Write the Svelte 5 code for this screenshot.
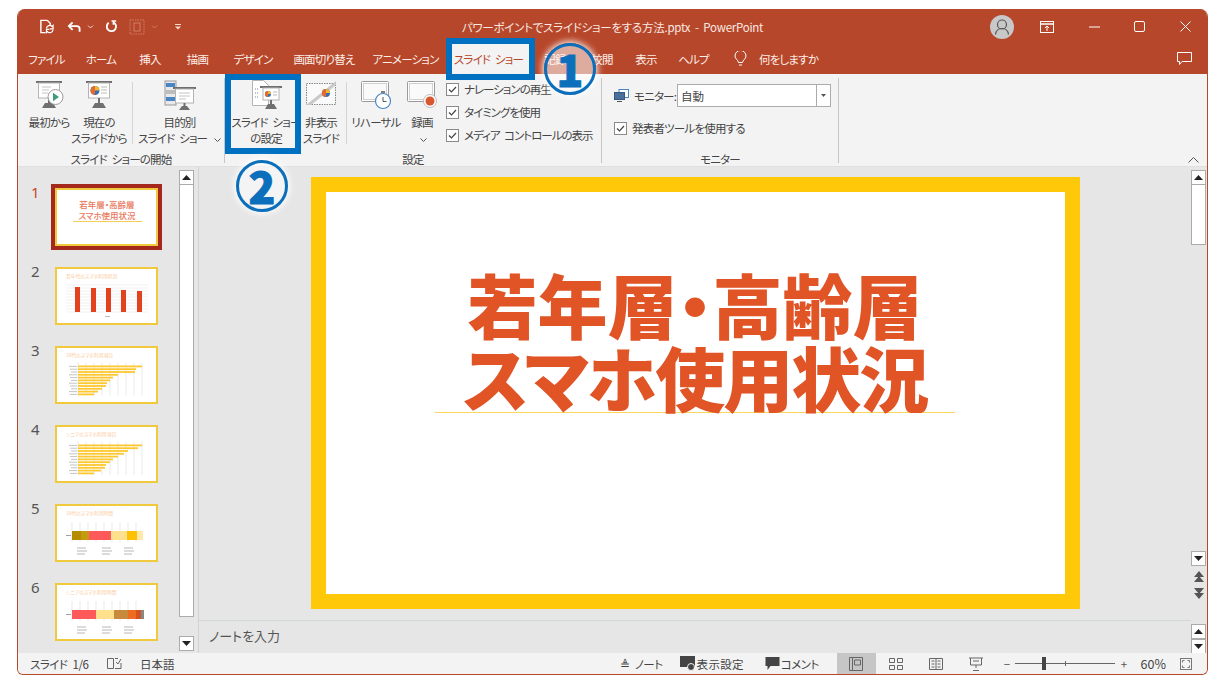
<script lang="ts">
  const tabs = [
    { label: "ファイル", w: 57 },
    { label: "ホーム", w: 52 },
    { label: "挿入", w: 46 },
    { label: "描画", w: 49 },
    { label: "デザイン", w: 62 },
    { label: "画面切り替え", w: 80 },
    { label: "アニメーション", w: 83 },
    { label: "スライド ショー", w: 83, active: true },
    { label: "記録", w: 50 },
    { label: "校閲", w: 44 },
    { label: "表示", w: 44 },
    { label: "ヘルプ", w: 51 },
  ];

  const checks = ["ナレーションの再生", "タイミングを使用", "メディア コントロールの表示"];

  const hbars3 = [64, 58, 57, 40, 35, 32, 29, 28, 24, 20, 16];
  const hbars4 = [64, 60, 50, 46, 40, 35, 32, 28, 27, 23, 16];
  const gridX = [23, 31, 39, 47, 55, 63, 71, 79, 87];

  const slides = [
    { n: 1, kind: "title" },
    { n: 2, kind: "col", title: "若年代のスマホ利用状況" },
    { n: 3, kind: "hbar", title: "10代のスマホ利用項目", bars: hbars3 },
    { n: 4, kind: "hbar", title: "シニアのスマホ利用項目", bars: hbars4 },
    {
      n: 5,
      kind: "stack",
      title: "10代のスマホ利用時間",
      segs: [
        [17, 9, "#b58c00"],
        [26, 8, "#c39a10"],
        [34, 22, "#ff5a5a"],
        [56, 16, "#ffe08c"],
        [72, 10, "#ffc000"],
        [82, 6, "#ffe8a8"],
      ],
    },
    {
      n: 6,
      kind: "stack",
      title: "シニアのスマホ利用時間",
      segs: [
        [17, 24, "#ff5a5a"],
        [41, 18, "#ffe08c"],
        [59, 14, "#c88a3c"],
        [73, 8, "#ee6c20"],
        [81, 5, "#d4521f"],
        [86, 3, "#888888"],
      ],
    },
  ];
</script>

{#snippet board()}
  <path d="M3 1h26v2H3z" fill="#6f6f6f" />
  <rect x="5.5" y="3" width="21" height="15" fill="#fff" stroke="#b4b4b4" />
  <path d="M16 18v5" stroke="#6f6f6f" stroke-width="2" />
  <path d="M9 28l3-5h8l3 5z" fill="#6f6f6f" />
{/snippet}

{#snippet pie(cx, cy, r)}
  <circle {cx} {cy} {r} fill="#2f6fb5" />
  <path d="M{cx} {cy}V{cy - r}A{r} {r} 0 0 0 {cx - r} {cy}A{r} {r} 0 0 0 {cx} {cy + r}z" fill="#e8692c" />
  <path d="M{cx} {cy}V{cy - r}A{r} {r} 0 0 1 {cx + r} {cy}z" fill="#f2b632" />
{/snippet}

{#snippet check()}
  <svg class="cb" viewBox="0 0 13 13" width="13" height="13">
    <rect x="0.5" y="0.5" width="12" height="12" fill="#fff" stroke="#8a8a8a" />
    <path d="M3 6.5l2.5 2.5L10 4" fill="none" stroke="#444" stroke-width="1.2" />
  </svg>
{/snippet}

{#snippet down()}
  <svg class="dn" viewBox="0 0 7 4" width="7" height="4" fill="none" stroke="#555"><path d="M.5.5l3 3 3-3" /></svg>
{/snippet}

{#snippet scrollBtn(up)}
  <div class="sbtn">
    <svg viewBox="0 0 9 5" width="9" height="5"><path d={up ? "M4.5 0L9 5H0z" : "M0 0h9L4.5 5z"} fill="#222" /></svg>
  </div>
{/snippet}

{#snippet thumbHead(title)}
  <text x="11" y="11" class="th-title">{title}</text>
{/snippet}

<div class="page">
  <div class="window">
    <header class="titlebar">
      <div class="qat">
        <svg viewBox="0 0 16 16" width="15" height="15" fill="none" stroke="#fff" stroke-width="1.5">
          <path d="M9 1.5H2v13h5M9 1.5l3 3v2" />
          <path d="M8 10a3.5 3.5 0 0 1 6-2l1-1v3.5h-3.5M15 11.500a3.500 3.500 0 0 1-6 2l-1 1V11h3" stroke-width="1.300" />
        </svg>
        <svg class="undo" viewBox="0 0 15 12" width="14" height="12" fill="none" stroke="#fff" stroke-width="2">
          <path d="M13.500 11V8a3 3 0 0 0-3-3H3" /><path d="M6 1L2 5l4 4" />
        </svg>
        <svg class="chev" viewBox="0 0 7 4" width="7" height="4" fill="none" stroke="#f3d9d0"><path d="M1 .5l2.500 2.500L6 .5" /></svg>
        <svg class="redo" viewBox="0 0 14 14" width="13" height="13" fill="none" stroke="#fff" stroke-width="2">
          <path d="M9 2.500a5 5 0 1 1-5 .5" /><path d="M7 1h5M9 1v4" stroke-width="1.600" />
        </svg>
        <svg class="pres" viewBox="0 0 16 16" width="16" height="16" fill="none" stroke="#cf7f67" stroke-dasharray="1.500 1">
          <rect x="1" y="1" width="14" height="14" /><rect x="5" y="4" width="6" height="8" stroke-dasharray="none" />
        </svg>
        <svg class="chev2" viewBox="0 0 7 4" width="7" height="4" fill="none" stroke="#cf7f67"><path d="M1 .5l2.500 2.500L6 .5" /></svg>
        <svg class="custom" viewBox="0 0 6 6" width="6" height="6"><path d="M0 0h6v1H0zM0 2.500h6L3 5.500z" fill="#f3d9d0" /></svg>
      </div>
      <div class="doc">パワーポイントでスライドショーをする方法.pptx  -  PowerPoint</div>
      <div class="winbtns">
        <div class="avatar">
          <svg viewBox="0 0 24 24" width="24" height="24" fill="none" stroke="#555" stroke-width="1.200">
            <circle cx="12" cy="9.500" r="4.500" /><path d="M5.500 19.500c.5-4 3-6 6.500-6s6 2 6.500 6" />
          </svg>
        </div>
        <svg class="wb-disp" viewBox="0 0 14 12" width="14" height="12" fill="none" stroke="#fff">
          <rect x=".5" y=".5" width="13" height="11" /><path d="M.5 3h13" stroke-width="1.500" /><path d="M7 10V5M5 7l2-2 2 2" />
        </svg>
        <svg class="wb-min" viewBox="0 0 11 2" width="11" height="2"><path d="M0 1h11" stroke="#fff" /></svg>
        <svg class="wb-max" viewBox="0 0 11 11" width="11" height="11" fill="none"><rect x=".5" y=".5" width="10" height="10" rx="1.500" stroke="#fff" /></svg>
        <svg class="wb-close" viewBox="0 0 11 11" width="11" height="11"><path d="M.5.5l10 10M10.500.5l-10 10" stroke="#fff" /></svg>
      </div>
    </header>

    <nav class="tabs">
      {#each tabs as t}
        <div class="tab" class:active={t.active} style="width: {t.w}px">{t.label}</div>
      {/each}
      <div class="tell">
        <svg viewBox="0 0 13 16" width="13" height="16" fill="none" stroke="#fff">
          <path d="M4.500 11.500C4.200 9 1 7.800 1 5a5.500 5.500 0 0 1 11 0c0 2.800-3.200 4-3.500 6.500z" /><path d="M5 14h3" />
        </svg>
        <span>何をしますか</span>
      </div>
      <svg class="comment" viewBox="0 0 15 14" width="15" height="14" fill="none" stroke="#fff">
        <path d="M.5.5h14v9H5l-2.500 3v-3h-2z" />
      </svg>
    </nav>

    <section class="ribbon">
      <div class="group g1">
        <div class="items">
          <div class="rb w44">
            <svg class="ico" viewBox="0 0 32 30" width="32" height="30">
              {@render board()}
              <path d="M9 7h9M9 10h7M9 13h6" stroke="#c4c4c4" />
              <circle cx="22.500" cy="17" r="7.500" fill="#fff" stroke="#9a9a9a" />
              <path d="M20 12.800l6 4.200-6 4.200z" fill="#3f9c7a" />
            </svg>
            <div class="lbl">最初から</div>
          </div>
          <div class="rb w56">
            <svg class="ico" viewBox="0 0 32 30" width="32" height="30">
              {@render board()}
              {@render pie(12, 10.500, 4.500)}
              <path d="M18 7h6M18 10h6M18 13h6" stroke="#bbb" />
            </svg>
            <div class="lbl">現在の<br />スライドから</div>
          </div>
          <div class="vsep"></div>
          <div class="rb w85">
            <svg class="ico" viewBox="0 0 32 30" width="32" height="30">
              <rect x="1" y="1" width="11" height="24" fill="#e8e8e8" stroke="#9a9a9a" />
              <path d="M2 3h9v4H2z" fill="#4a86c5" /><path d="M2 10h9v4H2z" fill="#bdbdbd" /><path d="M2 17h9v4H2z" fill="#4a86c5" />
              <path d="M9 7h23v2H9z" fill="#6f6f6f" />
              <rect x="11.500" y="9" width="18" height="14" fill="#fff" stroke="#b4b4b4" />
              <path d="M15 13h11M15 16h11M15 19h7" stroke="#c4c4c4" />
              <path d="M20.500 23v3" stroke="#6f6f6f" stroke-width="2" /><path d="M15 30l3-4h5l3 4z" fill="#6f6f6f" />
            </svg>
            <div class="lbl">目的別<br />スライド ショー {@render down()}</div>
          </div>
        </div>
        <div class="glabel">スライド ショーの開始</div>
      </div>

      <div class="group g2">
        <div class="items">
          <div class="rb w70">
            <svg class="ico" viewBox="0 0 32 30" width="32" height="30">
              <path d="M2.500.5h11l5 5v20h-16z" fill="#fff" stroke="#b4b4b4" />
              <path d="M5 9h3M5 13h3M5 17h3" stroke="#888" stroke-dasharray="1 1" />
              <path d="M10 6h22v2H10z" fill="#6f6f6f" />
              <rect x="13" y="8" width="16" height="12" fill="#fff" stroke="#b4b4b4" />
              {@render pie(18, 14, 3)}
              <path d="M23 12h4M23 15h4" stroke="#bbb" />
              <path d="M21 20v4" stroke="#6f6f6f" stroke-width="2" /><path d="M15 29l3-5h6l3 5z" fill="#6f6f6f" />
            </svg>
            <div class="lbl">スライド ショー<br />の設定</div>
          </div>
          <div class="rb w40">
            <svg class="ico" viewBox="0 0 32 30" width="32" height="30">
              <rect x="1.500" y="3.500" width="29" height="21" fill="#fafafa" stroke="#888" stroke-dasharray="1.500 1" />
              <path d="M1 25L31 1v4L6 25z" fill="#c9c9c9" />
              {@render pie(21, 13, 4)}
            </svg>
            <div class="lbl">非表示<br />スライド</div>
          </div>
          <div class="vsep"></div>
          <div class="rb w50">
            <svg class="ico" viewBox="0 0 32 30" width="32" height="30">
              <rect x="1.500" y="1.500" width="27" height="20" rx="1" fill="#fff" stroke="#9a9a9a" />
              <rect x="3.500" y="3.500" width="23" height="16" fill="#fafafa" stroke="#d0d0d0" />
              <circle cx="23" cy="21" r="7.500" fill="#fff" stroke="#4a86c5" stroke-width="1.200" />
              <path d="M23 17v4.500h3.500" fill="none" stroke="#555" />
              <path d="M21 12h4" stroke="#555" stroke-width="1.500" />
            </svg>
            <div class="lbl">リハーサル</div>
          </div>
          <div class="rb w42">
            <svg class="ico" viewBox="0 0 32 30" width="32" height="30">
              <rect x="1.500" y="1.500" width="27" height="20" rx="1" fill="#fff" stroke="#9a9a9a" />
              <rect x="3.500" y="3.500" width="23" height="16" fill="#fafafa" stroke="#d0d0d0" />
              <circle cx="24" cy="21" r="6.500" fill="#fff" stroke="#bbb" />
              <circle cx="24" cy="21" r="4.500" fill="#d9562e" />
            </svg>
            <div class="lbl">録画<br />{@render down()}</div>
          </div>
          <div class="checks">
            {#each checks as c}
              <div class="chk">{@render check()}<span>{c}</span></div>
            {/each}
          </div>
        </div>
        <div class="glabel">設定</div>
      </div>

      <div class="group g3">
        <div class="items col">
          <div class="mon">
            <svg viewBox="0 0 15 13" width="15" height="13">
              <rect x="5" y=".5" width="9.500" height="8" fill="#fff" stroke="#4a86c5" />
              <rect x=".5" y="3.500" width="10" height="7" fill="#4a6f9a" stroke="#36587e" />
              <path d="M3 12.500h5" stroke="#555" />
            </svg>
            <span class="monlbl">モニター:</span>
            <div class="select">
              <span class="selval">自動</span>
              <div class="selarrow"><svg viewBox="0 0 5 3" width="5" height="3"><path d="M0 0h5L2.500 3z" fill="#555" /></svg></div>
            </div>
          </div>
          <div class="chk presenter">{@render check()}<span>発表者ツールを使用する</span></div>
        </div>
        <div class="glabel">モニター</div>
      </div>

      <svg class="collapse" viewBox="0 0 11 6" width="11" height="6" fill="none" stroke="#555"><path d="M.5 5.500L5.500.5l5 5" /></svg>
    </section>

    <main class="work">
      <aside class="panel">
        <div class="thumblist">
          {#each slides as s}
            <div class="thumbrow">
              <span class="num" class:cur={s.n === 1}>{s.n}</span>
              <div class="thumbwrap" class:sel={s.n === 1}>
                <svg class="thumb" viewBox="0 0 103 58" width="103" height="58">
                  <rect x="1" y="1" width="101" height="56" fill="#fff" stroke="#f0c93c" stroke-width="2" />
                  {#if s.kind === "title"}
                    <text x="52" y="20" class="t1">若年層・高齢層</text>
                    <text x="52" y="31" class="t1">スマホ使用状況</text>
                    <path d="M18 33.500h69" stroke="#f5cf55" />
                  {:else if s.kind === "col"}
                    {@render thumbHead(s.title)}
                    {#each Array(10) as _, i}
                      <path d="M11 {18 + i * 3}h82" stroke="#e2e2e2" stroke-width=".5" />
                    {/each}
                    <rect x="20" y="20" width="5" height="25" fill="#e2431e" />
                    <rect x="36" y="21" width="5" height="24" fill="#e2431e" />
                    <rect x="51" y="21" width="5" height="24" fill="#e2431e" />
                    <rect x="66" y="23" width="5" height="22" fill="#e2431e" />
                    <rect x="82" y="24" width="5" height="21" fill="#e2431e" />
                    <path d="M50 49.500h5" stroke="#bbb" />
                  {:else if s.kind === "hbar"}
                    {@render thumbHead(s.title)}
                    {#each gridX as x}
                      <path d="M{x} 16.500v33" stroke="#dcdcdc" stroke-width=".6" />
                    {/each}
                    {#each s.bars as w, i}
                      <rect x="23" y={19.500 + i * 2.800} width={w} height="1.800" fill="#fdc82f" />
                      <path d="M{14 + (i % 3)} {20.400 + i * 2.800}H22" stroke="#aaa" stroke-width=".7" />
                    {/each}
                  {:else}
                    {@render thumbHead(s.title)}
                    {#each gridX as x}
                      <path d="M{x - 6} 18v20" stroke="#dcdcdc" stroke-width=".6" />
                    {/each}
                    {#each s.segs as seg}
                      <rect x={seg[0]} y="27" width={seg[1]} height="9" fill={seg[2]} />
                    {/each}
                    <path d="M11 31.500h5" stroke="#888" stroke-width=".8" />
                    <path d="M22 44h9M22 47h10M22 50h8M47 44h9M47 47h10M47 50h8M69 44h9M69 47h10M69 50h8" stroke="#999" stroke-width=".7" />
                  {/if}
                </svg>
              </div>
            </div>
          {/each}
        </div>
        <div class="scroll side">
          {@render scrollBtn(true)}
          <div class="sthumb long"></div>
          <div class="sspace"></div>
          {@render scrollBtn(false)}
        </div>
      </aside>

      <div class="editor">
        <div class="canvas">
          <div class="slide">
            <h1 class="stitle">若年層・高齢層<br /><span class="second">スマホ使用状況</span></h1>
            <div class="sline"></div>
          </div>
        </div>
        <div class="notes">ノートを入力</div>
      </div>

      <div class="rightcol">
        <div class="scroll main">
          {@render scrollBtn(true)}
          <div class="sthumb short"></div>
          <div class="sspace"></div>
          {@render scrollBtn(false)}
          <svg class="pg" viewBox="0 0 10 28" width="10" height="28">
            <path d="M5 0l5 6H0zM5 5l5 6H0zM0 17h10l-5 6zM0 22h10l-5 6z" fill="#555" />
          </svg>
        </div>
        <div class="scroll notebar">
          {@render scrollBtn(true)}
          {@render scrollBtn(false)}
        </div>
      </div>
    </main>

    <footer class="status">
      <span class="s-slide">スライド 1/6</span>
      <svg class="s-spell" viewBox="0 0 15 13" width="15" height="13" fill="none" stroke="#666">
        <path d="M.5 1.500h6v10h-6zM8 1.500h3M8 11.500h6V6" /><path d="M9 5l2 2 3-5" />
      </svg>
      <span class="s-lang">日本語</span>
      <div class="s-right">
        <span class="s-note">≜ ノート</span>
        <span class="s-disp">
          <svg viewBox="0 0 16 15" width="16" height="15"><path d="M0 0h15v11H0z" fill="#444" /><circle cx="11" cy="11" r="3.500" fill="#444" stroke="#f3f3f3" /></svg>
          <span class="wide">表示設定</span>
        </span>
        <span class="s-comm">
          <svg viewBox="0 0 14 13" width="15" height="13"><path d="M0 0h14v9H5l-3 4V9H0z" fill="#444" /></svg>
          コメント
        </span>
        <div class="views">
          <div class="view on">
            <svg viewBox="0 0 14 14" width="14" height="14" fill="none" stroke="#666"><path d="M.5.500h13v13H.5zM3.500.5v13" /><path d="M5.500 3h6v5h-6z" /></svg>
          </div>
          <div class="view">
            <svg viewBox="0 0 14 14" width="14" height="14" fill="none" stroke="#666"><path d="M.5 1.500h5v4h-5zM8.500 1.500h5v4h-5zM.5 8.500h5v4h-5zM8.500 8.500h5v4h-5z" /></svg>
          </div>
          <div class="view">
            <svg viewBox="0 0 14 14" width="14" height="14" fill="none" stroke="#666"><path d="M.5 1.500h13v11H.5zM7 1.500v11M2.500 4h3M2.500 7h3M2.500 10h3M8.500 4h3M8.500 7h3M8.500 10h3" /></svg>
          </div>
          <div class="view">
            <svg viewBox="0 0 14 14" width="14" height="14" fill="none" stroke="#666"><path d="M0 1h14M1.500 1v7h11V1M7 8v3M4 13.500h6M4 4h6" /></svg>
          </div>
        </div>
        <span class="z-minus">−</span>
        <div class="slider">
          <div class="knob"></div>
          <div class="mid"></div>
        </div>
        <span class="z-plus">+</span>
        <span class="zoom">60%</span>
        <svg class="fit" viewBox="0 0 12 12" width="12" height="12" fill="none" stroke="#777">
          <rect x=".5" y=".5" width="11" height="11" /><path d="M2.500 4.500v-2h2M7.500 2.500h2v2M9.500 7.500v2h-2M4.500 9.500h-2v-2" />
        </svg>
      </div>
    </footer>
  </div>

  <!-- callouts drawn over the screenshot -->
  <div class="mark m1"></div>
  <div class="mark m2"></div>
  <div class="badge b1">1</div>
  <div class="badge b2">2</div>
</div>

<style>
  :global(body) {
    background: #fff;
  }
  .page {
    position: relative;
    width: 1225px;
    height: 687px;
    padding: 9px 17px 0;
    box-sizing: border-box;
    font-family: "Noto Sans CJK JP", "Noto Sans", sans-serif;
    font-size: 11.5px;
    letter-spacing: -0.8px;
    word-spacing: 3px;
    font-feature-settings: "palt";
    color: #444;
    overflow: hidden;
  }
  .window {
    width: 1191px;
    height: 666px;
    display: flex;
    flex-direction: column;
    box-sizing: border-box;
    border: 1px solid #b7472a;
    border-top: none;
    border-radius: 8px 8px 6px 6px;
    overflow: hidden;
    background: #e6e6e6;
  }
  .titlebar {
    flex: none;
    height: 35px;
    display: grid;
    grid-template-columns: 1fr auto 1fr;
    align-items: center;
    background: #b7472a;
    color: #f8e8e2;
  }
  .qat {
    display: flex;
    align-items: center;
    padding-left: 21px;
  }
  .undo { margin-left: 13px; }
  .chev { margin-left: 6px; }
  .redo { margin-left: 11px; }
  .pres { margin-left: 11px; }
  .chev2 { margin-left: 6px; }
  .custom { margin-left: 17px; }
  .doc {
    white-space: pre;
    letter-spacing: -0.25px;
    word-spacing: 0;
  }
  .winbtns {
    display: flex;
    align-items: center;
    justify-content: flex-end;
    padding-right: 16px;
  }
  .avatar {
    width: 24px;
    height: 24px;
    border-radius: 50%;
    background: #c8c8c8;
  }
  .wb-disp { margin-left: 26px; }
  .wb-min { margin-left: 35px; }
  .wb-max { margin-left: 34px; }
  .wb-close { margin-left: 35px; }

  .tabs {
    flex: none;
    height: 30px;
    display: flex;
    align-items: center;
    background: #b7472a;
    color: #fbeee9;
  }
  .tab {
    height: 30px;
    line-height: 30px;
    text-align: center;
    white-space: nowrap;
  }
  .tab.active {
    color: #b7472a;
    background: #f3f3f3;
  }
  .tell {
    display: flex;
    align-items: center;
    gap: 12px;
    margin-left: 15px;
  }
  .comment {
    margin-left: auto;
    margin-right: 15px;
  }

  .ribbon {
    flex: none;
    position: relative;
    height: 93px;
    display: flex;
    background: #f3f3f3;
    border-bottom: 1px solid #e0e0e0;
    box-sizing: border-box;
  }
  .group {
    flex: none;
    box-sizing: border-box;
    height: 85px;
    margin-top: 4px;
    border-right: 1px solid #c6c6c6;
    display: flex;
    flex-direction: column;
  }
  .g1 { width: 207px; }
  .g2 { width: 377px; }
  .g3 { width: 237px; }
  .items {
    height: 72px;
    display: flex;
    box-sizing: border-box;
    padding-top: 2px;
  }
  .g1 .items { padding-left: 9px; }
  .g2 .items { padding-left: 6px; }
  .items.col {
    flex-direction: column;
    padding-left: 12px;
    padding-top: 6px;
  }
  .rb {
    flex: none;
    display: flex;
    flex-direction: column;
    align-items: center;
    white-space: nowrap;
  }
  .w40 { width: 40px; }
  .w42 { width: 42px; }
  .w44 { width: 44px; }
  .w50 { width: 50px; }
  .w56 { width: 56px; }
  .w70 { width: 70px; }
  .w85 { width: 85px; }
  .ico { flex: none; }
  .lbl {
    margin-top: 4px;
    line-height: 16px;
    text-align: center;
  }
  .dn {
    vertical-align: 1px;
    margin-left: 2px;
  }
  .vsep {
    flex: none;
    width: 1px;
    height: 62px;
    margin: 2px 4px 0 5px;
    background: #d4d4d4;
  }
  .checks {
    margin-left: 3px;
    display: flex;
    flex-direction: column;
    gap: 5px;
    letter-spacing: -1px;
  }
  .chk {
    display: flex;
    align-items: center;
    gap: 5px;
    height: 18px;
    white-space: nowrap;
  }
  .cb { flex: none; }
  .glabel {
    height: 13px;
    line-height: 18px;
    text-align: center;
    white-space: nowrap;
  }
  .mon {
    display: flex;
    align-items: center;
    height: 23px;
  }
  .monlbl {
    flex: none;
    width: 38px;
    margin-left: 5px;
    white-space: nowrap;
  }
  .select {
    display: flex;
    align-items: center;
    justify-content: space-between;
    flex: none;
    margin-left: 5px;
    width: 154px;
    height: 23px;
    box-sizing: border-box;
    background: #fff;
    border: 1px solid #ababab;
  }
  .selval {
    padding-left: 3px;
    letter-spacing: 0;
  }
  .selarrow {
    width: 13px;
    height: 21px;
    border-left: 1px solid #ababab;
    display: flex;
    align-items: center;
    justify-content: center;
  }
  .presenter { margin-top: 12px; }
  .collapse {
    position: absolute;
    right: 8px;
    bottom: 3px;
  }

  .work {
    flex: 1;
    min-height: 0;
    display: flex;
  }
  .panel {
    flex: none;
    width: 181px;
    box-sizing: border-box;
    display: flex;
    border-right: 1px solid #d2d2d2;
    padding-right: 4px;
  }
  .thumblist {
    flex: none;
    width: 161px;
    padding-top: 21px;
    overflow: hidden;
  }
  .thumbrow {
    display: flex;
    height: 58px;
    margin-bottom: 21px;
  }
  .num {
    width: 37px;
    height: 18px;
    margin-top: -5px;
    padding-left: 13px;
    box-sizing: border-box;
    font-family: "Noto Sans", sans-serif;
    font-size: 15px;
    letter-spacing: 0;
    line-height: 18px;
    color: #555;
  }
  .num.cur { color: #c8472a; }
  .thumbwrap {
    position: relative;
    width: 103px;
    height: 58px;
  }
  .thumbwrap.sel {
    outline: 4px solid #a4281c;
  }
  .thumb { display: block; }
  .t1 {
    font-size: 8.500px;
    font-weight: 500;
    letter-spacing: 0;
    fill: #e8775a;
    text-anchor: middle;
  }
  .th-title {
    font-size: 4.800px;
    letter-spacing: 0;
    fill: #fbc99a;
  }

  .scroll {
    display: flex;
    flex-direction: column;
    width: 15px;
    box-sizing: border-box;
  }
  .scroll.side {
    padding-top: 3px;
    padding-bottom: 2px;
    flex: none;
  }
  .sbtn {
    flex: none;
    width: 15px;
    height: 15px;
    box-sizing: border-box;
    background: #fff;
    border: 1px solid #ababab;
    display: flex;
    align-items: center;
    justify-content: center;
  }
  .sthumb {
    width: 15px;
    box-sizing: border-box;
    background: #fff;
    border: 1px solid #ababab;
    border-top: none;
  }
  .sthumb.long { height: 432px; }
  .sthumb.short { height: 60px; }
  .sspace { flex: 1; }

  .editor {
    flex: 1;
    min-width: 0;
    display: flex;
    flex-direction: column;
  }
  .canvas {
    flex: 1;
    display: flex;
    justify-content: center;
    padding-top: 10px;
    box-sizing: border-box;
  }
  .slide {
    width: 769px;
    height: 432px;
    box-sizing: border-box;
    border: 15px solid #ffc90a;
    background: #fff;
    padding-top: 75px;
  }
  .stitle {
    margin: 0;
    text-align: center;
    font-size: 70px;
    letter-spacing: 0;
    line-height: 73px;
    font-weight: 900;
    color: #e05426;
    white-space: nowrap;
  }
  .second { letter-spacing: -2px; }
  .sline {
    width: 520px;
    height: 1px;
    margin: -1px auto 0;
    background: #f9d65c;
  }
  .notes {
    flex: none;
    height: 33px;
    line-height: 30px;
    padding-left: 10px;
    border-top: 1px solid #d2d8d6;
    box-sizing: border-box;
    font-size: 13px;
    letter-spacing: 0;
    color: #555;
  }
  .rightcol {
    flex: none;
    width: 16px;
    display: flex;
    flex-direction: column;
  }
  .scroll.main {
    flex: 1;
    padding-top: 3px;
    position: relative;
  }
  .pg {
    flex: none;
    margin: 5px 0 21px 3px;
  }
  .scroll.notebar {
    flex: none;
    height: 33px;
    padding-top: 4px;
  }

  .status {
    flex: none;
    height: 21px;
    display: flex;
    align-items: center;
    background: #f3f3f3;
    padding-left: 12px;
    white-space: nowrap;
    letter-spacing: -0.5px;
  }
  .s-slide { width: 77px; }
  .s-spell { flex: none; }
  .s-lang {
    margin-left: 18px;
    letter-spacing: 0;
  }
  .s-right {
    margin-left: auto;
    display: flex;
    align-items: center;
    height: 100%;
    padding-right: 15px;
  }
  .s-note { margin-right: 17px; }
  .s-disp, .s-comm {
    display: flex;
    align-items: center;
    gap: 1px;
  }
  .wide { letter-spacing: 0.3px; }
  .s-comm { margin-left: 21px; margin-right: 18px; }
  .views {
    display: flex;
    align-items: center;
    height: 100%;
  }
  .view {
    width: 40px;
    height: 100%;
    display: flex;
    align-items: center;
    justify-content: center;
  }
  .view.on {
    width: 39px;
    background: #c6c6c6;
  }
  .z-minus {
    margin-left: 8px;
    color: #555;
  }
  .z-plus {
    margin-left: 6px;
    color: #555;
  }
  .slider {
    position: relative;
    flex: none;
    width: 100px;
    height: 1px;
    margin-left: 5px;
    background: #666;
  }
  .knob {
    position: absolute;
    left: 27px;
    top: -6px;
    width: 4px;
    height: 13px;
    background: #444;
  }
  .mid {
    position: absolute;
    left: 50px;
    top: -2px;
    width: 1px;
    height: 5px;
    background: #666;
  }
  .zoom {
    margin-left: 14px;
    font-size: 12.500px;
    letter-spacing: 0;
  }
  .fit { margin-left: 14px; flex: none; }

  .mark {
    position: absolute;
    box-sizing: border-box;
    border: 6px solid #0070c0;
  }
  .m1 { left: 446px; top: 38px; width: 89px; height: 42px; }
  .m2 { left: 225px; top: 74px; width: 76px; height: 80px; }
  .badge {
    position: absolute;
    width: 52px;
    height: 52px;
    box-sizing: border-box;
    border: 3.500px solid #0b6fbc;
    border-radius: 50%;
    background: rgba(255, 255, 255, 0.55);
    box-shadow: 0 0 6px 2px rgba(255, 255, 255, 0.85);
    color: #0b6fbc;
    font-family: "Noto Sans CJK JP", sans-serif;
    font-size: 44px;
    font-weight: 900;
    letter-spacing: 0;
    line-height: 45px;
    text-align: center;
    -webkit-text-stroke: 1px #0b6fbc;
  }
  .b1 { left: 544px; top: 43px; }
  .b2 { left: 236px; top: 160px; }
</style>
